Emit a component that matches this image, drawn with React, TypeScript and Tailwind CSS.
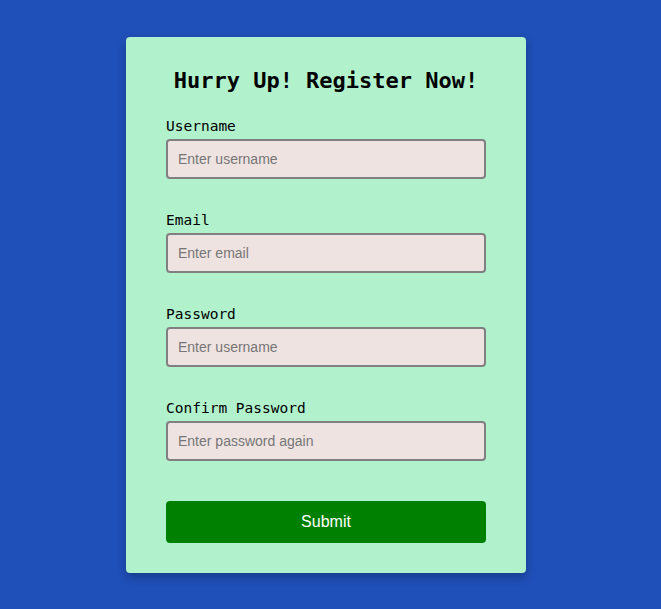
import React from "react";

const fields = [
  { label: "Username", placeholder: "Enter username", type: "text" },
  { label: "Email", placeholder: "Enter email", type: "email" },
  { label: "Password", placeholder: "Enter username", type: "password" },
  { label: "Confirm Password", placeholder: "Enter password again", type: "password" },
];

export default function App() {
  return (
    <div className="min-h-[609px] w-full bg-[#1f4fb8] pt-[37px]">
      <form
        className="ml-[126px] w-[400px] rounded-[4px] bg-[#b1f2cd] px-[40px] pt-[29px] pb-[30px] shadow-[0_4px_10px_rgba(0,0,0,0.25)]"
        onSubmit={(e) => e.preventDefault()}
      >
        <h2 className="text-center font-['DejaVu_Sans_Mono',monospace] text-[22px] font-bold leading-[30px] text-black">
          Hurry Up! Register Now!
        </h2>
        <div className="mt-[20px] flex flex-col gap-[31px]">
          {fields.map((f) => (
            <div key={f.label}>
              <label className="mb-[3px] block font-['DejaVu_Sans_Mono',monospace] text-[14.5px] leading-[20px] text-black">
                {f.label}
              </label>
              <input
                type={f.type}
                placeholder={f.placeholder}
                className="block h-[40px] w-full rounded-[4px] border-2 border-[#808080] bg-[#efe3e1] px-[10px] font-['Liberation_Sans',Arial,sans-serif] text-[14px] text-black placeholder:text-[#767676] outline-none"
              />
            </div>
          ))}
        </div>
        <button
          type="submit"
          className="mt-[40px] block h-[42px] w-full rounded-[4px] bg-[#008000] font-['Liberation_Sans',Arial,sans-serif] text-[16px] text-white"
        >
          Submit
        </button>
      </form>
    </div>
  );
}
